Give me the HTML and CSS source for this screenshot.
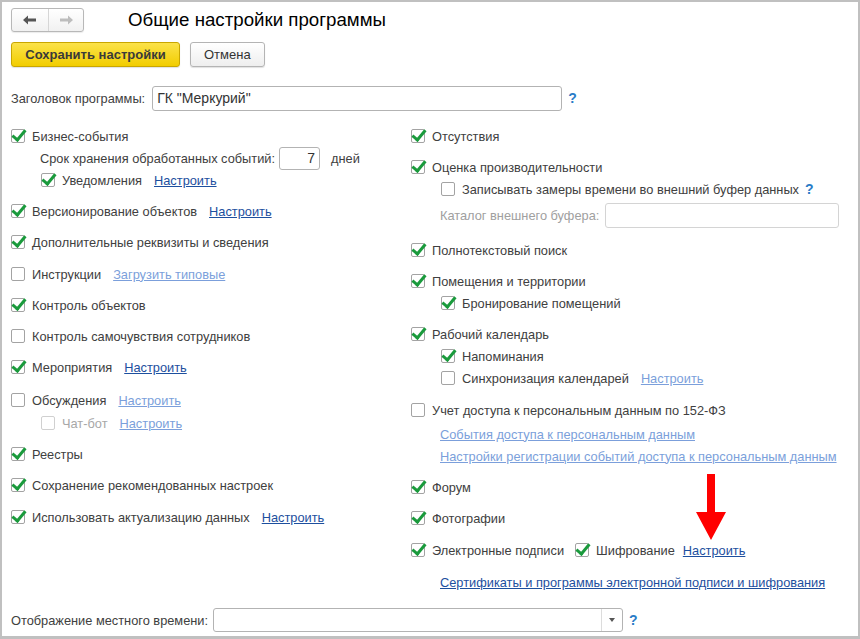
FILE: index.html
```html
<!DOCTYPE html>
<html lang="ru">
<head>
<meta charset="utf-8">
<title>Общие настройки программы</title>
<link rel="stylesheet" href="styles.css">
</head>
<body>
<div class="window">
  <div class="toolbar">
    <div class="nav">
      <span class="nav-btn">
        <svg width="14" height="10" viewBox="0 0 14 10"><path d="M0 5 L5 0.5 L5 3.5 L13 3.5 L13 6.5 L5 6.5 L5 9.5 Z" fill="#555"/></svg>
      </span>
      <span class="nav-btn nav-btn-right">
        <svg width="14" height="10" viewBox="0 0 14 10"><path d="M14 5 L9 0.5 L9 3.5 L1 3.5 L1 6.5 L9 6.5 L9 9.5 Z" fill="#bdbdbd"/></svg>
      </span>
    </div>
    <h1 class="title">Общие настройки программы</h1>
  </div>

  <div class="actions">
    <button class="btn btn-primary">Сохранить настройки</button>
    <button class="btn">Отмена</button>
  </div>

  <div class="field-row">
    <span class="label">Заголовок программы:</span>
    <span class="input input-title">ГК "Меркурий"</span>
    <span class="help">?</span>
  </div>

  <div class="columns">
    <div class="col">
      <div class="group">
        <div class="row"><span class="cb on"></span><span>Бизнес-события</span></div>
        <div class="row sub-text"><span>Срок хранения обработанных событий:</span><span class="input input-num">7</span><span class="unit">дней</span></div>
        <div class="row sub"><span class="cb on"></span><span>Уведомления</span><a class="link">Настроить</a></div>
      </div>
      <div class="group">
        <div class="row"><span class="cb on"></span><span>Версионирование объектов</span><a class="link">Настроить</a></div>
      </div>
      <div class="group">
        <div class="row"><span class="cb on"></span><span>Дополнительные реквизиты и сведения</span></div>
      </div>
      <div class="group pad1">
        <div class="row"><span class="cb"></span><span>Инструкции</span><a class="link light">Загрузить типовые</a></div>
      </div>
      <div class="group">
        <div class="row"><span class="cb on"></span><span>Контроль объектов</span></div>
      </div>
      <div class="group">
        <div class="row"><span class="cb"></span><span>Контроль самочувствия сотрудников</span></div>
      </div>
      <div class="group">
        <div class="row"><span class="cb on"></span><span>Мероприятия</span><a class="link">Настроить</a></div>
      </div>
      <div class="group pad2">
        <div class="row"><span class="cb"></span><span>Обсуждения</span><a class="link light">Настроить</a></div>
        <div class="row sub disabled chat"><span class="cb"></span><span>Чат-бот</span><a class="link light">Настроить</a></div>
      </div>
      <div class="group">
        <div class="row"><span class="cb on"></span><span>Реестры</span></div>
      </div>
      <div class="group">
        <div class="row"><span class="cb on"></span><span>Сохранение рекомендованных настроек</span></div>
      </div>
      <div class="group pad1">
        <div class="row"><span class="cb on"></span><span>Использовать актуализацию данных</span><a class="link">Настроить</a></div>
      </div>
    </div>

    <div class="col">
      <div class="group">
        <div class="row"><span class="cb on"></span><span>Отсутствия</span></div>
      </div>
      <div class="group tall">
        <div class="row"><span class="cb on"></span><span>Оценка производительности</span></div>
        <div class="row sub"><span class="cb"></span><span>Записывать замеры времени во внешний буфер данных</span><span class="help help-inline">?</span></div>
        <div class="row sub-text input-row"><span class="muted">Каталог внешнего буфера:</span><span class="input input-catalog"></span></div>
      </div>
      <div class="group">
        <div class="row"><span class="cb on"></span><span>Полнотекстовый поиск</span></div>
      </div>
      <div class="group">
        <div class="row"><span class="cb on"></span><span>Помещения и территории</span></div>
        <div class="row sub"><span class="cb on"></span><span>Бронирование помещений</span></div>
      </div>
      <div class="group">
        <div class="row"><span class="cb on"></span><span>Рабочий календарь</span></div>
        <div class="row sub"><span class="cb on"></span><span>Напоминания</span></div>
        <div class="row sub"><span class="cb"></span><span>Синхронизация календарей</span><a class="link light">Настроить</a></div>
      </div>
      <div class="group pad1">
        <div class="row"><span class="cb"></span><span>Учет доступа к персональным данным по 152-ФЗ</span></div>
        <div class="row sub-text link-first"><a class="link light nomargin">События доступа к персональным данным</a></div>
        <div class="row sub-text"><a class="link light nomargin">Настройки регистрации событий доступа к персональным данным</a></div>
      </div>
      <div class="group">
        <div class="row"><span class="cb on"></span><span>Форум</span></div>
      </div>
      <div class="group">
        <div class="row"><span class="cb on"></span><span>Фотографии</span></div>
      </div>
      <div class="group pad1">
        <div class="row"><span class="cb on"></span><span>Электронные подписи</span><span class="cb on cb-inline"></span><span>Шифрование</span><a class="link link-tight">Настроить</a></div>
        <div class="row sub-text cert"><a class="link nomargin">Сертификаты и программы электронной подписи и шифрования</a></div>
      </div>
    </div>
  </div>

  <div class="spacer"></div>

  <div class="bottom-row">
    <span class="label">Отображение местного времени:</span>
    <span class="combo"><span class="combo-btn"><svg width="6" height="4" viewBox="0 0 6 4"><path d="M0 0 L6 0 L3 4 Z" fill="#555"/></svg></span></span>
    <span class="help">?</span>
  </div>

  <svg class="red-arrow" width="32" height="68" viewBox="0 0 32 68">
    <path d="M11 0 L19 0 L19 38 L30 38 L15 66 L0 38 L11 38 Z" fill="#f00"/>
  </svg>
</div>
</body>
</html>
```

FILE: styles.css
```css
html, body {
  margin: 0;
  padding: 0;
  background: #fff;
}

body {
  font-family: "Liberation Sans", Arial, sans-serif;
  font-size: 12.8px;
  color: #404040;
}

.window {
  position: relative;
  width: 860px;
  height: 639px;
  box-sizing: border-box;
  border: 2px solid #c0c0c0;
  border-bottom-width: 3px;
  padding: 6px 0 4px 9px;
  display: flex;
  flex-direction: column;
  overflow: hidden;
}

/* toolbar */
.toolbar {
  display: flex;
  align-items: center;
  height: 24px;
}

.nav {
  display: flex;
  height: 24px;
  box-sizing: border-box;
  border: 1px solid #b8b8b8;
  border-radius: 3px;
  background: linear-gradient(#ffffff, #f1f1f1);
  box-shadow: 0 1px 1px rgba(0, 0, 0, 0.08);
}

.nav-btn {
  width: 36px;
  display: flex;
  align-items: center;
  justify-content: center;
}

.nav-btn-right {
  border-left: 1px solid #d6d6d6;
  width: 34px;
}

.title {
  margin: 0 0 0 44px;
  font-size: 18.7px;
  font-weight: normal;
  color: #000;
  line-height: 24px;
}

/* buttons */
.actions {
  display: flex;
  gap: 10px;
  margin-top: 10px;
}

.btn {
  height: 25px;
  box-sizing: border-box;
  border: 1px solid #b4b4b4;
  border-radius: 3px;
  background: linear-gradient(#ffffff, #eeeeee);
  font-family: inherit;
  font-size: 13px;
  color: #333;
  padding: 0 13px;
  box-shadow: 0 1px 1px rgba(0, 0, 0, 0.12);
}

.btn-primary {
  width: 169px;
  background: linear-gradient(#fbe24a, #f2cd00);
  border-color: #c9a600;
  font-weight: bold;
  color: #3a3a3a;
}

/* fields */
.field-row {
  display: flex;
  align-items: center;
  margin-top: 19px;
  height: 24px;
}

.label {
  white-space: nowrap;
}

.input {
  display: flex;
  align-items: center;
  box-sizing: border-box;
  border: 1px solid #b3b3b3;
  border-radius: 3px;
  background: #fff;
  color: #333;
}

.input-title {
  margin-left: 7px;
  width: 410px;
  height: 25px;
  padding-left: 4px;
  font-size: 14px;
}

.help {
  color: #2a7cc7;
  font-weight: bold;
  font-size: 14px;
  margin-left: 6px;
}

.help-inline {
  margin-left: 6px;
}

/* columns */
.columns {
  display: grid;
  grid-template-columns: 400px 1fr;
  margin-top: 15px;
}

.group {
  margin-bottom: 9px;
}

.group.pad1 {
  padding-top: 1px;
}

.group.pad2 {
  padding-top: 2px;
}

.group.tall {
  margin-bottom: 11px;
}

.row {
  display: flex;
  align-items: center;
  height: 22px;
  white-space: nowrap;
}

.row.sub {
  padding-left: 30px;
}

.row.sub-text {
  padding-left: 29px;
}

.row.chat {
  margin-top: 1px;
}

.row.input-row {
  height: 25px;
  margin-top: 3px;
}

.row.link-first {
  margin-top: 2px;
}

.row.cert {
  margin-top: 10px;
}

.cb {
  position: relative;
  flex: none;
  width: 14px;
  height: 14px;
  box-sizing: border-box;
  border: 1px solid #a3a3a3;
  border-radius: 2px;
  background: #fff;
  margin-right: 7px;
}

.cb.on::after {
  content: "";
  position: absolute;
  left: 3px;
  top: -3px;
  width: 5px;
  height: 11px;
  border-right: 3px solid #1a9a3c;
  border-bottom: 3px solid #1a9a3c;
  transform: rotate(40deg);
  transform-origin: center;
}

.cb-inline {
  margin-left: 11px;
}

.disabled {
  color: #a8a8a8;
}

.disabled .cb {
  border-color: #d0d0d0;
}

.muted {
  color: #a0a0a0;
}

.link {
  margin-left: 12px;
  color: #1d4f9e;
  text-decoration: underline;
  cursor: pointer;
}

.link.light {
  color: #7b9fdb;
}

.link.nomargin {
  margin-left: 0;
}

.link.link-tight {
  margin-left: 8px;
}

.input-num {
  margin-left: 4px;
  width: 41px;
  height: 23px;
  justify-content: flex-end;
  padding-right: 4px;
  font-size: 14px;
}

.unit {
  margin-left: 11px;
}

.input-catalog {
  margin-left: 6px;
  width: 234px;
  height: 25px;
  border-color: #d4d4d4;
}

.spacer {
  flex: 1;
}

/* bottom */
.bottom-row {
  display: flex;
  align-items: center;
  height: 24px;
}

.combo {
  margin-left: 5px;
  width: 410px;
  height: 24px;
  box-sizing: border-box;
  border: 1px solid #b3b3b3;
  border-radius: 3px;
  display: flex;
  justify-content: flex-end;
}

.combo-btn {
  width: 20px;
  border-left: 1px solid #dcdcdc;
  display: flex;
  align-items: center;
  justify-content: center;
}

.red-arrow {
  position: absolute;
  left: 694px;
  top: 472px;
}
```
